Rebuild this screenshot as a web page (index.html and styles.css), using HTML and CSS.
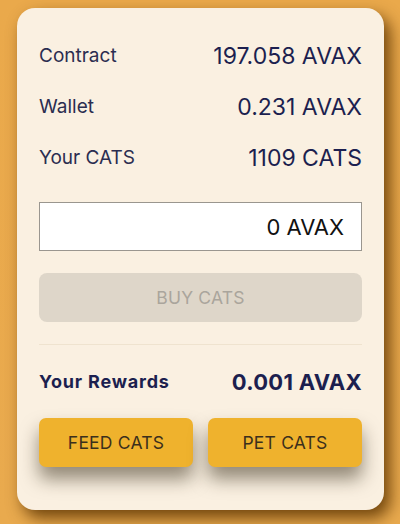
FILE: index.html
```html
<!DOCTYPE html>
<html lang="en">
<head>
  <meta charset="UTF-8" />
  <meta name="viewport" content="width=device-width, initial-scale=1.0"/>
  <title>Cats Miner</title>
  <link rel="stylesheet" href="styles.css">
</head>
<body>
<div class="card">
  <div class="stat-row">
    <span class="stat-label">Contract</span>
    <span class="stat-value">197.058 AVAX</span>
  </div>
  <div class="stat-row">
    <span class="stat-label">Wallet</span>
    <span class="stat-value">0.231 AVAX</span>
  </div>
  <div class="stat-row">
    <span class="stat-label">Your CATS</span>
    <span class="stat-value">1109 CATS</span>
  </div>

  <div class="amount-box">
    <input type="text" class="amount-input" value="0">
    <span class="amount-unit">AVAX</span>
  </div>

  <button class="buy-button" disabled>BUY CATS</button>

  <hr class="divider">

  <div class="rewards-row">
    <span>Your Rewards</span>
    <span>0.001 AVAX</span>
  </div>

  <div class="action-row">
    <button class="action-button">FEED CATS</button>
    <button class="action-button">PET CATS</button>
  </div>
</div>
</body>
</html>
```

FILE: styles.css
```css
body {
  margin: 0;
  height: 524px;
  background: linear-gradient(180deg, #eaa94b 0%, #e9aa4e 100%);
  font-family: Inter, "DejaVu Sans", sans-serif;
}
.card {
  margin: 8px 16px 0 17px;
  height: 502px;
  box-sizing: border-box;
  padding: 22px 22px 0 22px;
  background-color: #faf0e1;
  border-radius: 18px;
  box-shadow: 6px 8px 16px rgba(90, 50, 0, 0.85);
}
.stat-row {
  height: 51px;
  display: flex;
  justify-content: space-between;
  align-items: center;
}
.stat-label {
  font-size: 19px;
  color: #2b2d50;
}
.stat-value {
  font-size: 23px;
  color: #1c1f4f;
}
.amount-box {
  margin-top: 19px;
  height: 49px;
  box-sizing: border-box;
  border: 1px solid #9a968f;
  background-color: #fff;
  display: flex;
  align-items: center;
  padding-right: 17px;
  font-size: 22px;
  color: #111;
}
.amount-input {
  flex: 1;
  min-width: 0;
  border: none;
  outline: none;
  background: none;
  text-align: right;
  font: inherit;
  color: inherit;
  padding: 0 6px 0 0;
}
.buy-button {
  display: block;
  width: 100%;
  margin-top: 22px;
  height: 49px;
  border: none;
  border-radius: 8px;
  background-color: #ded6c9;
  color: #aaa59c;
  font-family: inherit;
  font-size: 17.5px;
  letter-spacing: 0.2px;
}
.divider {
  margin: 22px 0 0 0;
  border: none;
  border-top: 1px solid #efe3cf;
}
.rewards-row {
  height: 73px;
  display: flex;
  justify-content: space-between;
  align-items: center;
  font-weight: bold;
  color: #1c1f4f;
}
.rewards-row span:first-child {
  font-size: 18px;
  letter-spacing: 0.8px;
}
.rewards-row span:last-child {
  font-size: 22px;
  letter-spacing: 0.3px;
}
.action-row {
  display: flex;
  gap: 15px;
}
.action-button {
  flex: 1;
  height: 49px;
  border: none;
  border-radius: 7px;
  background-color: #efb22d;
  color: #3b2f1c;
  font-family: inherit;
  font-size: 17.5px;
  letter-spacing: 0.2px;
  box-shadow: 0 12px 18px rgba(45, 35, 15, 0.5);
}
```
